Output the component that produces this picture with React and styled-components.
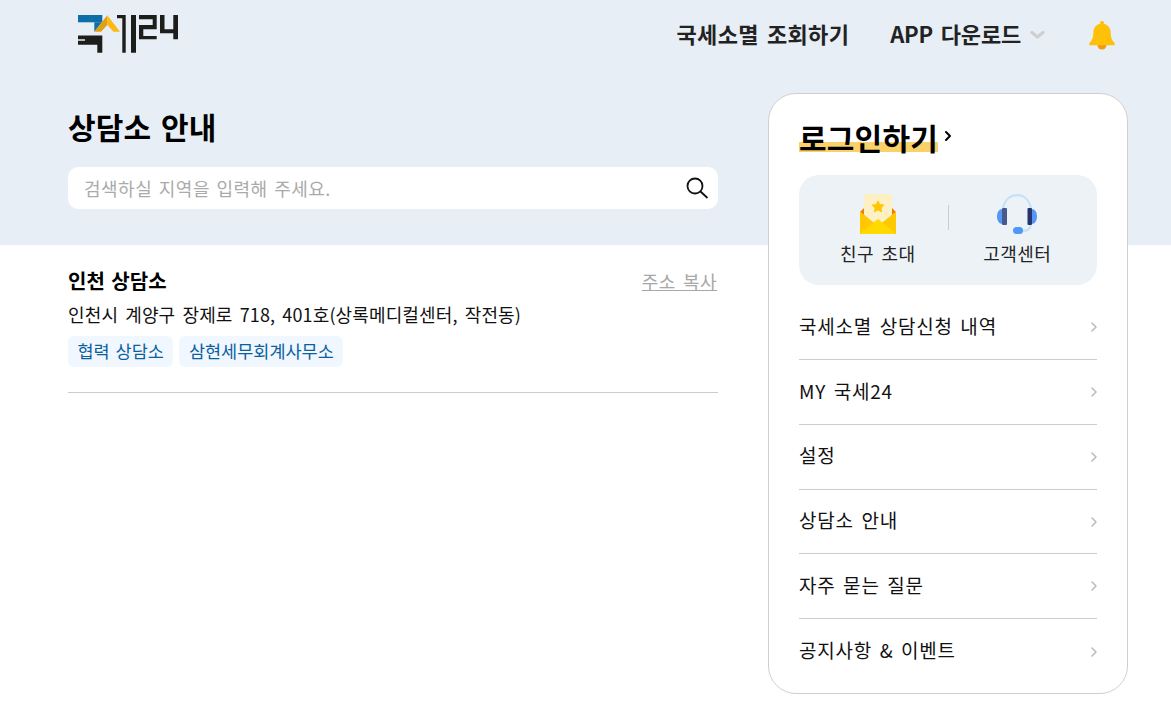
import React from "react";
import styled, { createGlobalStyle } from "styled-components";

const Global = createGlobalStyle`
  html, body { margin: 0; padding: 0; background: #fff; }
  body { font-family: "Noto Sans CJK KR", "Noto Sans", sans-serif; color: #000; }
  * { box-sizing: border-box; }
`;
const Page = styled.div`
  width: 1171px; height: 718px; overflow: hidden;
  background: linear-gradient(#e7eef6 245px, #fff 245px);
`;
const Header = styled.header`
  height: 70px; display: flex; align-items: center; justify-content: space-between;
  padding: 0 56px 0 78px;
`;
const LogoWrap = styled.div`display: flex; margin-top: -2px;`;
const Nav = styled.nav`display: flex; align-items: center;`;
const NavLink = styled.a`
  font-size: 22px; font-weight: 700; color: #222; line-height: 30px; white-space: nowrap;
  letter-spacing: ${p => p.$ls}; word-spacing: 3px; margin-bottom: 4px;
  margin-left: ${p => p.$ml || "0"};
`;
const Chevron = styled.span`display: flex; margin-left: 9px;`;
const BellWrap = styled.span`display: flex; margin-left: 44px;`;
const Main = styled.main`
  display: grid; grid-template-columns: 650px 360px; column-gap: 50px;
  padding: 23px 0 0 68px;
`;
const Title = styled.h1`
  margin: 14px 0 0; font-size: 30px; font-weight: 700; line-height: 38px; word-spacing: 3px;
  letter-spacing: 0.1px;
`;
const SearchBox = styled.div`
  margin-top: 22px; height: 42px; border-radius: 10px; background: #fff;
  display: flex; align-items: center; justify-content: space-between; padding: 0 9px 0 16px;
`;
const Placeholder = styled.span`font-size: 18px; color: #aaa; word-spacing: 2px; letter-spacing: 0.5px;`;
const Item = styled.section`
  margin-top: 36px; padding-top: 24px; padding-bottom: 25px; border-bottom: 1px solid #ccc;
`;
const ItemHead = styled.div`display: flex; justify-content: space-between; align-items: center; height: 24px;`;
const ItemName = styled.h2`margin: 0; font-size: 20px; font-weight: 700; word-spacing: 2px; line-height: 24px;`;
const CopyLink = styled.a`font-size: 18px; color: #a8a8a8; text-decoration: underline; word-spacing: 3px; letter-spacing: .4px; padding-right: 1px;`;
const Address = styled.p`margin: 8px 0 0; font-size: 18px; line-height: 26px; color: #111; word-spacing: 3px; letter-spacing: .13px; white-space: nowrap;`;
const Tags = styled.div`display: flex; gap: 6px; margin-top: 9px;`;
const Tag = styled.span`
  height: 31px; padding: 0 9.5px; border-radius: 6px; background: #f1f7fe; color: #0a5f9e;
  font-size: 17.5px; line-height: 30px; word-spacing: 2px; white-space: nowrap;
`;
const Card = styled.aside`
  height: 601px; background: #fff; border: 1px solid #cfcfcf; border-radius: 28px;
  padding: 25px 30px 0;
`;
const LoginRow = styled.div`display: flex; align-items: center; gap: 6px; height: 36px;`;
const LoginText = styled.span`
  font-size: 30px; font-weight: 700; line-height: 36px; letter-spacing: 0.2px; white-space: nowrap;
  background: linear-gradient(transparent 23px, #fad069 23px, #fad069 33px, transparent 33px);
`;
const LoginChevron = styled.span`display: flex; margin-top: -3px;`;
const Quick = styled.div`
  margin-top: 20px; height: 110px; border-radius: 20px; background: #edf2f7;
  display: grid; grid-template-columns: 1fr 1px 1fr; align-items: start;
`;
const QuickItem = styled.div`
  display: flex; flex-direction: column; align-items: center; padding-top: 19px;
  padding-left: ${p => p.$pl || "0"}; padding-right: ${p => p.$pr || "0"};
`;
const QuickLabel = styled.span`font-size: 18px; color: #222; line-height: 24px; margin-top: 7px; word-spacing: 3px; letter-spacing: .4px;`;
const Sep = styled.div`width: 1px; height: 25px; margin-top: 30px; background: #ccc;`;
const Menu = styled.ul`list-style: none; margin: 10.4px 0 0; padding: 0;`;
const Row = styled.li`
  height: 64.75px; display: flex; align-items: center; justify-content: space-between;
  border-bottom: 1px solid #ccc; font-size: 19px; letter-spacing: .8px; color: #111; word-spacing: 2.5px; padding-bottom: 4px;
  &:last-child { border-bottom: 0; }
`;
const MenuChevron = styled.span`display: flex; margin-top: 4px; margin-right: -1px;`;

const Logo = () => (
  <svg width="101" height="39" viewBox="0 0 101 39">
    <path d="M0 0H24.300V7.300H0Z" fill="#0d6fa8" />
    <path d="M16.300 7.300H24L16.300 16.700Z" fill="#0d6fa8" />
    <path d="M29.300 0.300L16.300 16.700H23L29.300 10Z" fill="#dfa112" />
    <path d="M29.300 0.300L42 16.700H35.500L29.300 10Z" fill="#fcb813" />
    <path d="M0 20.500H24.300V37.700H19.300V29.700H0V25.700H7V24.300H0Z" fill="#1d1d1b" />
    <path d="M39 0H47.700V37.700H44.300V3.300H39ZM53 0H58V37.700H53Z" fill="#1d1d1b" />
    <path d="M61 0H78.700V14.300H65.300V21H78.700V24.300H61V10H74.700V4.300H61Z" fill="#1d1d1b" />
    <path d="M82 0H86.500V14.300H95.300V0H100V24.300H95.300V18.300H82Z" fill="#1d1d1b" />
  </svg>
);
const DownChevron = () => (
  <svg width="15" height="10" viewBox="0 0 15 10" fill="none">
    <path d="M2 2.500L7.500 7L13 2.500" stroke="#cfcfcf" strokeWidth="3.200" strokeLinecap="round" strokeLinejoin="round" />
  </svg>
);
const Bell = () => (
  <svg width="26" height="29" viewBox="0 0 26 29">
    <path d="M8.500 24a4.500 4.500 0 0 0 9 0Z" fill="#f59a0c" />
    <path d="M13 0a1.800 1.800 0 0 1 1.700 2.700C19.500 3.800 21.700 7.500 21.700 12C21.700 16.500 22.700 19 25.400 21.800C26.300 22.800 25.800 24.200 24.500 24.200H1.500C.2 24.200-.3 22.800.6 21.800C3.300 19 4.300 16.500 4.300 12C4.300 7.500 6.500 3.800 11.300 2.700A1.800 1.800 0 0 1 13 0Z" fill="#ffc107" />
  </svg>
);
const SearchIcon = () => (
  <svg width="24" height="24" viewBox="0 0 24 24" fill="none" stroke="#111" strokeWidth="1.800" strokeLinecap="round">
    <circle cx="10" cy="10" r="7.500" />
    <path d="M15.500 15.500L22 21.500" />
  </svg>
);
const SmallChevron = ({ color = "#000", sw = 1.6 }) => (
  <svg width={8} height={12} viewBox="0 0 8 12" fill="none">
    <path d="M2 2L6 6L2 10" stroke={color} strokeWidth={sw} strokeLinecap="round" strokeLinejoin="round" />
  </svg>
);
const Mail = () => (
  <svg width="40" height="40" viewBox="0 0 40 40">
    <path d="M2 18L7 13V24ZM38 18L33 13V24Z" fill="#f57c00" />
    <path d="M6 0H34V21L20 31L6 21Z" fill="#fdf0c4" />
    <path d="M20 7L21.800 10.600L25.800 11.100L22.900 13.900L23.600 17.800L20 15.900L16.400 17.800L17.100 13.900L14.200 11.100L18.200 10.600Z" fill="#ffc800" stroke="#ffc800" strokeLinejoin="round" />
    <path d="M2 17.500L20 32L38 17.500V40H2Z" fill="#ffc800" />
    <path d="M2 39.500L20 25L38 39.500V40H2Z" fill="#ffd900" />
  </svg>
);
const Headset = () => (
  <svg width="40" height="40" viewBox="0 0 40 40" fill="none">
    <path d="M6 14C8 5 14 1.200 20 1.200C26 1.200 32 5 34 14" stroke="#c4e0fb" strokeWidth="2.200" />
    <path d="M33.500 31C33.500 35 30 37 25 37" stroke="#c4e0fb" strokeWidth="2.200" />
    <path d="M5.500 15V30C2 30 0 26.500 0 22.500C0 18.500 2 15 5.500 15Z" fill="#5697f3" />
    <path d="M34.500 15V30C38 30 40 26.500 40 22.500C40 18.500 38 15 34.500 15Z" fill="#5697f3" />
    <rect x="5" y="14" width="5" height="17" rx="1" fill="#475a8f" />
    <rect x="30.500" y="14" width="4.500" height="17" rx="1" fill="#24356f" />
    <rect x="16" y="33" width="10" height="7" rx="3.500" fill="#4e98f7" />
  </svg>
);

const menu = ["국세소멸 상담신청 내역", "MY 국세24", "설정", "상담소 안내", "자주 묻는 질문", "공지사항 & 이벤트"];

export default function App() {
  return (
    <Page>
      <Global />
      <Header>
        <LogoWrap><Logo /></LogoWrap>
        <Nav>
          <NavLink $ls="0.3px">국세소멸 조회하기</NavLink>
          <NavLink $ml="41px" $ls="-0.2px">APP 다운로드</NavLink>
          <Chevron><DownChevron /></Chevron>
          <BellWrap><Bell /></BellWrap>
        </Nav>
      </Header>
      <Main>
        <div>
          <Title>상담소 안내</Title>
          <SearchBox>
            <Placeholder>검색하실 지역을 입력해 주세요.</Placeholder>
            <SearchIcon />
          </SearchBox>
          <Item>
            <ItemHead>
              <ItemName>인천 상담소</ItemName>
              <CopyLink>주소 복사</CopyLink>
            </ItemHead>
            <Address>인천시 계양구 장제로 718, 401호(상록메디컬센터, 작전동)</Address>
            <Tags>
              <Tag>협력 상담소</Tag>
              <Tag>삼현세무회계사무소</Tag>
            </Tags>
          </Item>
        </div>
        <Card>
          <LoginRow>
            <LoginText>로그인하기</LoginText>
            <LoginChevron><SmallChevron sw={2} /></LoginChevron>
          </LoginRow>
          <Quick>
            <QuickItem $pl="9px">
              <Mail />
              <QuickLabel>친구 초대</QuickLabel>
            </QuickItem>
            <Sep />
            <QuickItem $pr="11px">
              <Headset />
              <QuickLabel>고객센터</QuickLabel>
            </QuickItem>
          </Quick>
          <Menu>
            {menu.map(m => (
              <Row key={m}>
                {m}
                <MenuChevron><SmallChevron color="#bbb" /></MenuChevron>
              </Row>
            ))}
          </Menu>
        </Card>
      </Main>
    </Page>
  );
}
